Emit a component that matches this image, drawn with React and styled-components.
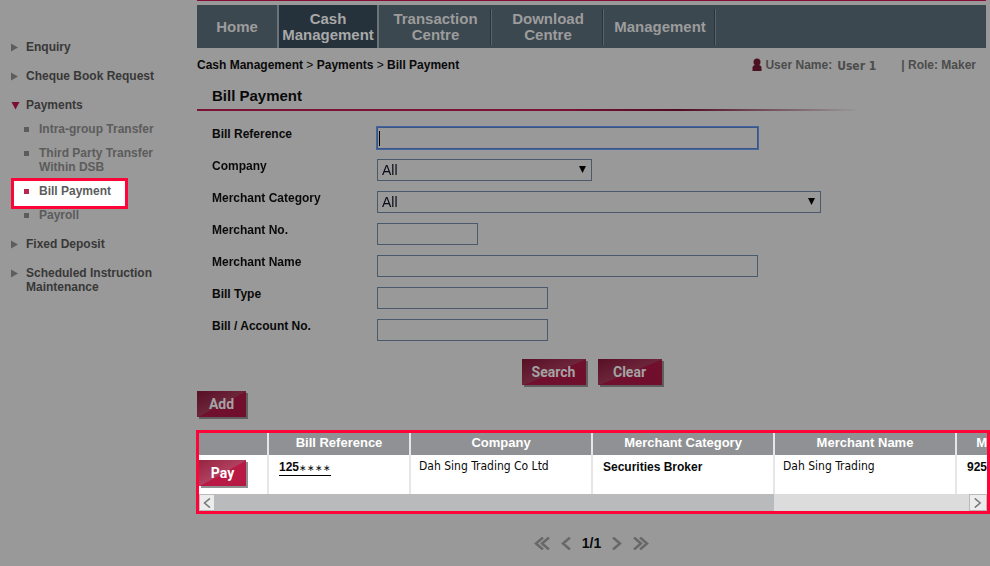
import React, { useState } from "react"
import styled, { createGlobalStyle, css } from "styled-components"

const GlobalStyle = createGlobalStyle`
  * {
    box-sizing: border-box;
  }
  body {
    margin: 0;
    background: #999;
    color: #0a0a0a;
    font: bold 12px/14px "Liberation Sans", Arial, sans-serif;
  }
  a {
    color: inherit;
    text-decoration: none;
  }
  button,
  input,
  select {
    font: inherit;
    border-radius: 0;
  }
`

const Page = styled.div`
  display: flex;
  min-height: 100vh;
  overflow: hidden;
`

/* ---------- sidebar ---------- */

const Sidebar = styled.nav`
  flex: 0 0 197px;
  padding: 40px 30px 0 11px;
`

const MenuList = styled.ul`
  list-style: none;
  margin: 0;
  padding: 0;
  display: flex;
  flex-direction: column;
  gap: 15px;
  color: #383838;
`

const SubList = styled(MenuList)`
  gap: 10px;
  margin: 10px 0 0 13px;
  color: #5c5c5c;
`

const MenuLink = styled.a`
  display: flex;
  align-items: flex-start;
`

const Arrow = styled.svg`
  flex: none;
  width: 9px;
  height: 9px;
  margin: 3px 6px 0 0;
  fill: ${({ $open }) => ($open ? "#7a0e33" : "#5e5e5e")};
`

const SubItem = styled.li`
  position: relative;
  z-index: 0;
  ${({ $active }) =>
    $active &&
    css`
      &::before {
        content: "";
        position: absolute;
        z-index: -1;
        inset: -6px 39px -11px -13px;
        background: #fff;
        border: 3px solid #fd0539;
      }
    `}
`

const Bullet = styled.span`
  flex: none;
  width: 5px;
  height: 5px;
  margin: 5px 10px 0 0;
  background: ${({ $active }) => ($active ? "#b9254f" : "#5c5c5c")};
`

/* ---------- header ---------- */

const Main = styled.main`
  flex: 1;
  min-width: 0;
  padding-right: 4px;
`

const TopNav = styled.nav`
  display: flex;
  height: 48px;
  border-top: 1px solid #850f37;
  box-shadow: inset 0 4px #999;
  padding-top: 4px;
  background: #3c4850;
`

const Tab = styled.a`
  display: flex;
  align-items: center;
  justify-content: center;
  width: ${({ $width }) => $width}px;
  font-size: 15px;
  line-height: 16px;
  text-align: center;
  color: ${({ $active }) => ($active ? "#a8a8a8" : "#9c9c9c")};
  background: ${({ $active }) => ($active ? "#26323b" : "none")};
  border-right: 2px solid #6c747a;
  ${({ $groove }) =>
    $groove &&
    css`
      border-right: 0;
      background: linear-gradient(to right, #29353d 1px, #59646b 1px) right
        center / 2px 36px no-repeat;
    `}
`

const InfoBar = styled.div`
  display: flex;
  justify-content: space-between;
  padding: 10px 10px 0 0;
`

const Crumb = styled.span`
  font-weight: normal;
`

const UserInfo = styled.div`
  display: flex;
  color: #4c4c4c;
`

const UserIcon = styled.svg`
  width: 10px;
  height: 13px;
  margin-right: 3px;
  fill: #4d1023;
`

const UserName = styled.span`
  margin: 1px 25px 0 5px;
  font-family: "DejaVu Sans Condensed", Tahoma, sans-serif;
`

const Title = styled.h1`
  margin: 14px 0 0;
  padding: 0 15px 4px;
  font-size: 15px;
  line-height: 18px;
`

const Rule = styled.div`
  height: 2px;
  background: linear-gradient(
    to right,
    #7b1236 45%,
    #500a22 61%,
    rgba(80, 10, 34, 0) 84%
  );
`

/* ---------- search form ---------- */

const Form = styled.form`
  padding: 16px 15px 0;
`

const Field = styled.div`
  display: flex;
  align-items: flex-start;
  height: 32px;
`

const Label = styled.label`
  flex: 0 0 165px;
`

const control = css`
  height: 22px;
  width: ${({ $width }) => $width}px;
  border: 1px solid #4a5a6b;
  background: transparent;
  font-weight: normal;
  color: #0a0a18;
`

const TextInput = styled.input`
  ${control}
  padding: 0 2px;
  &:focus {
    outline: 1px solid #4465a0;
    border-color: #3a5583;
    caret-color: transparent;
  }
  &:focus:placeholder-shown {
    background: linear-gradient(#000, #000) 1px 3px / 1px 15px no-repeat;
  }
  &:focus:not(:placeholder-shown) {
    caret-color: #000;
  }
`

const SelectWrap = styled.div`
  position: relative;
`

const Select = styled.select`
  ${control}
  appearance: none;
  padding: 0 24px 0 4px;
  font-size: 14px;
`

const SelectArrow = styled.svg`
  position: absolute;
  right: 6px;
  top: 7px;
  width: 7px;
  height: 7px;
  pointer-events: none;
`

const Actions = styled.div`
  display: flex;
  justify-content: center;
  gap: 12px;
  padding-top: 8px;
`

const RedButton = styled.button`
  display: block;
  width: ${({ $width }) => $width}px;
  height: 26px;
  padding: 0;
  border: 0;
  font-family: Roboto, "Arial Narrow", sans-serif;
  font-size: 14px;
  line-height: 26px;
  color: ${({ $bright }) => ($bright ? "#fff" : "#a3a3a3")};
  background: ${({ $bright }) =>
    $bright
      ? "linear-gradient(to bottom right, #94243f, #b0405f 50%, #b91a45 52%, #b51a43)"
      : "linear-gradient(to bottom right, #560f25, #6c2539 50%, #70102e 52%, #6f0f2d)"};
  box-shadow: 2px 2px ${({ $bright }) => ($bright ? "#909090" : "#5f5f5f")};
`

const Toolbar = styled.div`
  padding: 6px 0 13px;
`

/* ---------- results ---------- */

const Results = styled.section`
  margin: 0 -4px 0 -1px;
  border: 3px solid #fd0539;
  background: #fff;
`

const TableClip = styled.div`
  overflow: hidden;
`

const Table = styled.table`
  width: 881px;
  table-layout: fixed;
  border-collapse: separate;
  border-spacing: 0;
`

const Th = styled.th`
  width: ${({ $width }) => $width}px;
  height: 22px;
  padding: 0 0 3px;
  border-right: 2px solid #e6e6e8;
  background: #8f9194;
  color: #fff;
  font-size: 13px;
  line-height: 15px;
`

const Td = styled.td`
  height: 39px;
  padding: 5px 0 0 ${({ $inset }) => $inset}px;
  border-right: 2px solid #e6e6e8;
  vertical-align: top;
`

const PlainTd = styled(Td)`
  padding: 4px 0 0 8px;
  font-family: "DejaVu Sans Condensed", Tahoma, sans-serif;
  font-weight: normal;
`

const RefLink = styled.a`
  display: inline-block;
  border-bottom: 1px solid #000;
`

const Masked = styled.span`
  font-size: 9px;
  font-weight: normal;
`

const ScrollBar = styled.div`
  display: flex;
  height: 17px;
  background: #dcdcdd;
`

const ScrollThumb = styled.div`
  flex: 0 1 71%;
  margin-right: auto;
  background: #b9babc;
`

const ScrollButton = styled.button`
  flex: none;
  display: grid;
  place-items: center;
  width: ${({ $width }) => $width}px;
  padding: 0;
  border: 1px solid #b9babc;
  background: #ececec;
  color: #77787a;
`

const Pager = styled.nav`
  display: flex;
  justify-content: center;
  align-items: center;
  gap: 11px;
  padding-top: 21px;
  font-size: 14px;
  line-height: 16px;
`

const PagerButton = styled.button`
  display: flex;
  padding: 0;
  border: 0;
  background: none;
  color: #686868;
`

const menu = [
  { label: "Enquiry" },
  { label: "Cheque Book Request" },
  {
    label: "Payments",
    children: [
      "Intra-group Transfer",
      "Third Party Transfer Within DSB",
      "Bill Payment",
      "Payroll",
    ],
  },
  { label: "Fixed Deposit" },
  { label: "Scheduled Instruction Maintenance" },
]

const tabs = [
  { label: "Home", width: 82 },
  { label: "Cash Management", width: 100, active: true },
  { label: "Transaction Centre", width: 113, groove: true },
  { label: "Download Centre", width: 112, groove: true },
  { label: "Management", width: 112, groove: true },
]

const fields = [
  { id: "billReference", label: "Bill Reference", width: 381 },
  { id: "company", label: "Company", width: 215, select: true },
  { id: "category", label: "Merchant Category", width: 444, select: true },
  { id: "merchantNo", label: "Merchant No.", width: 101 },
  { id: "merchantName", label: "Merchant Name", width: 381 },
  { id: "billType", label: "Bill Type", width: 171 },
  { id: "accountNo", label: "Bill / Account No.", width: 171 },
]

const columns = [
  { label: "", width: 70 },
  { label: "Bill Reference", width: 142 },
  { label: "Company", width: 182 },
  { label: "Merchant Category", width: 182 },
  { label: "Merchant Name", width: 182 },
  { label: "Merchant No.", width: 123 },
]

const Chevron = ({ right, double, size = 13, stroke = 2.5 }) => {
  const width = double ? 16 : 10
  return (
    <svg
      width={(width * size) / 13}
      height={size}
      viewBox={`0 0 ${width} 13`}
      fill="none"
      stroke="currentColor"
      strokeWidth={stroke}
    >
      <g transform={right ? `translate(${width} 0) scale(-1 1)` : undefined}>
        <path d="M9 0.5L2 6.5L9 12.5" />
        {double && <path d="M15 0.5L8 6.5L15 12.5" />}
      </g>
    </svg>
  )
}

const SideMenu = () => (
  <Sidebar aria-label="Services">
    <MenuList>
      {menu.map(({ label, children }) => (
        <li key={label}>
          <MenuLink href="#">
            <Arrow viewBox="0 0 9 9" $open={!!children}>
              <path
                d={children ? "M0.5 1H8.5L4.5 8.5Z" : "M0 0.5L7 4.5L0 8.5Z"}
              />
            </Arrow>
            {label}
          </MenuLink>
          {children && (
            <SubList>
              {children.map(child => {
                const active = child === "Bill Payment"
                return (
                  <SubItem key={child} $active={active}>
                    <MenuLink href="#">
                      <Bullet $active={active} />
                      {child}
                    </MenuLink>
                  </SubItem>
                )
              })}
            </SubList>
          )}
        </li>
      ))}
    </MenuList>
  </Sidebar>
)

const SearchForm = () => {
  const [values, setValues] = useState({})

  const handleChange = e =>
    setValues({ ...values, [e.target.id]: e.target.value })

  return (
    <Form onSubmit={e => e.preventDefault()}>
      {fields.map(({ id, label, width, select }, i) => (
        <Field key={id}>
          <Label htmlFor={id}>{label}</Label>
          {select ? (
            <SelectWrap>
              <Select id={id} $width={width}>
                <option>All</option>
              </Select>
              <SelectArrow viewBox="0 0 7 7">
                <path d="M0 0H7L3.5 7Z" />
              </SelectArrow>
            </SelectWrap>
          ) : (
            <TextInput
              id={id}
              $width={width}
              placeholder=" "
              autoFocus={i === 0}
              value={values[id] || ""}
              onChange={handleChange}
            />
          )}
        </Field>
      ))}
      <Actions>
        <RedButton $width={64}>Search</RedButton>
        <RedButton type="reset" $width={64} onClick={() => setValues({})}>
          Clear
        </RedButton>
      </Actions>
    </Form>
  )
}

const App = () => (
  <Page>
    <GlobalStyle />
    <SideMenu />
    <Main>
      <TopNav>
        {tabs.map(({ label, width, active, groove }) => (
          <Tab
            key={label}
            href="#"
            $width={width}
            $active={active}
            $groove={groove}
          >
            {label}
          </Tab>
        ))}
      </TopNav>
      <InfoBar>
        <div>
          Cash Management <Crumb>&gt;</Crumb> Payments <Crumb>&gt;</Crumb> Bill
          Payment
        </div>
        <UserInfo>
          <UserIcon viewBox="0 0 10 13">
            <circle cx="5" cy="4" r="3.5" />
            <path d="M0.5 13V9Q1 7.5 3 7V5H7V7Q9 7.5 9.5 9V13Z" />
          </UserIcon>
          User Name:
          <UserName>User 1</UserName>| Role: Maker
        </UserInfo>
      </InfoBar>
      <Title>Bill Payment</Title>
      <Rule />
      <SearchForm />
      <Toolbar>
        <RedButton $width={49}>Add</RedButton>
      </Toolbar>
      <Results>
        <TableClip>
          <Table>
            <thead>
              <tr>
                {columns.map(({ label, width }) => (
                  <Th key={label} $width={width}>
                    {label}
                  </Th>
                ))}
              </tr>
            </thead>
            <tbody>
              <tr>
                <Td $inset={0}>
                  <RedButton $width={47} $bright>
                    Pay
                  </RedButton>
                </Td>
                <Td $inset={10}>
                  <RefLink href="#">
                    125<Masked>∗∗∗∗</Masked>
                  </RefLink>
                </Td>
                <PlainTd>Dah Sing Trading Co Ltd</PlainTd>
                <Td $inset={10}>Securities Broker</Td>
                <PlainTd>Dah Sing Trading</PlainTd>
                <Td $inset={10}>925</Td>
              </tr>
            </tbody>
          </Table>
        </TableClip>
        <ScrollBar>
          <ScrollButton $width={16} aria-label="Scroll left">
            <Chevron size={10} stroke={2} />
          </ScrollButton>
          <ScrollThumb />
          <ScrollButton $width={18} aria-label="Scroll right">
            <Chevron right size={10} stroke={2} />
          </ScrollButton>
        </ScrollBar>
      </Results>
      <Pager aria-label="Pages">
        <PagerButton aria-label="First page">
          <Chevron double />
        </PagerButton>
        <PagerButton aria-label="Previous page">
          <Chevron />
        </PagerButton>
        <span>1/1</span>
        <PagerButton aria-label="Next page">
          <Chevron right />
        </PagerButton>
        <PagerButton aria-label="Last page">
          <Chevron right double />
        </PagerButton>
      </Pager>
    </Main>
  </Page>
)

export default App
